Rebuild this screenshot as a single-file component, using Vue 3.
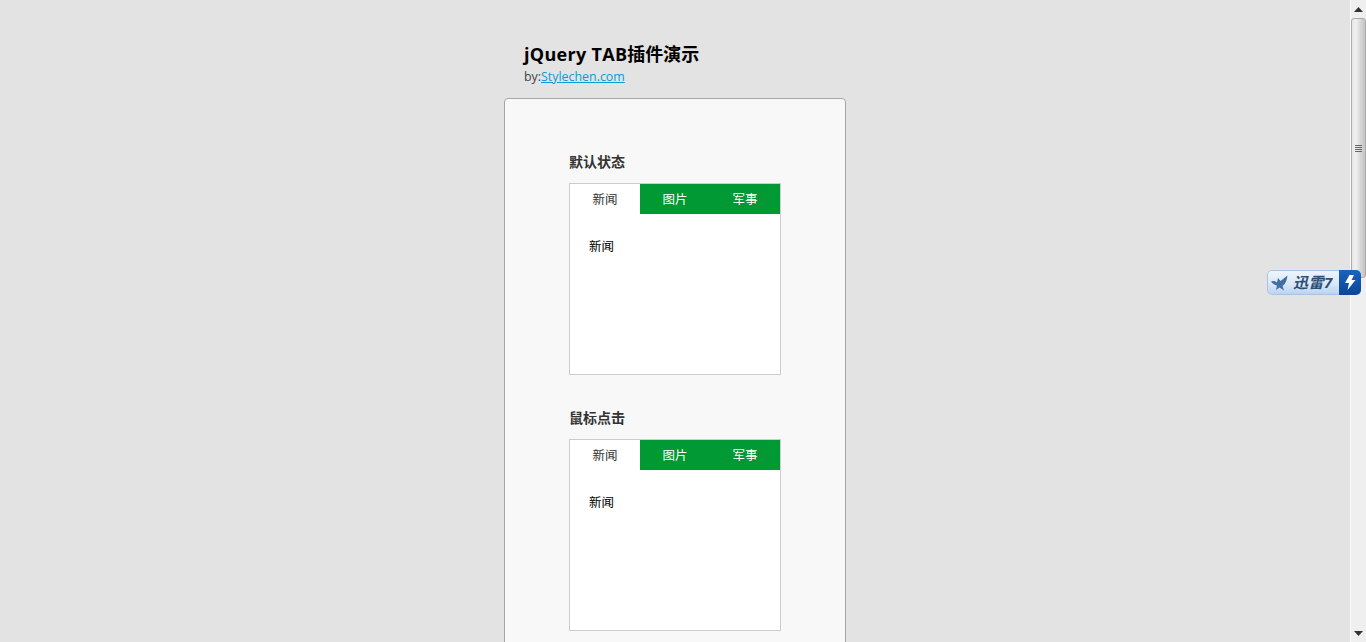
<template>
  <div class="page">
    <div class="main">
      <div class="wrap">
        <h1 class="title"><span class="latin">jQuery TAB</span>插件演示</h1>
        <p class="by">by:<a class="link" href="#">Stylechen.com</a></p>
        <div class="card">
          <section v-for="demo in demos" :key="demo" class="demo">
            <h3 class="demo-title">{{ demo }}</h3>
            <div class="tabbox">
              <ul class="tabs">
                <li v-for="(tab, i) in tabs" :key="tab" class="tab" :class="{ active: i === 0 }">{{ tab }}</li>
              </ul>
              <div class="tab-body">{{ tabs[0] }}</div>
            </div>
          </section>
        </div>
      </div>
    </div>

    <div class="scrollbar">
      <div class="arrow-btn">
        <svg width="9" height="5" viewBox="0 0 9 5"><path d="M4.5 0L9 5H0z" fill="#333" /></svg>
      </div>
      <div class="thumb">
        <div class="grip"><i></i><i></i><i></i><i></i></div>
      </div>
      <div class="track"></div>
      <div class="arrow-btn">
        <svg width="9" height="5" viewBox="0 0 9 5"><path d="M0 0H9L4.5 5z" fill="#333" /></svg>
      </div>
    </div>

    <div class="xunlei">
      <div class="xl-left">
        <svg class="xl-bird" width="18" height="16" viewBox="0 0 18 16">
          <path d="M0 6.500C2.500 5.500 4.500 6 6 7.500L7 3L9.500 6L16.500 0.500C16 5 14.500 9 11.500 11L13 15.500L8.500 12.500L5 15L6 10.500C3.500 10 1.500 8.500 0 6.500z" fill="#3f6fa3" />
        </svg>
        <span class="xl-text">迅雷7</span>
      </div>
      <div class="xl-right">
        <svg width="12" height="15" viewBox="0 0 12 15"><path d="M5.500 0H10L7.500 5H11.500L3.500 15L5 8H1z" fill="#fff" /></svg>
      </div>
    </div>
  </div>
</template>

<script setup>
const demos = ['默认状态', '鼠标点击'];
const tabs = ['新闻', '图片', '军事'];
</script>

<style>
html,
body {
  margin: 0;
  height: 100%;
  overflow: hidden;
  background: #e3e3e3;
}
</style>

<style scoped>
.page {
  position: relative;
  display: flex;
  height: 642px;
  overflow: hidden;
  font-family: "Open Sans", "Noto Sans CJK SC", sans-serif;
  color: #333;
}

.main {
  flex: 1;
  min-width: 0;
}

.wrap {
  width: 342px;
  margin: 0 auto;
}

.title {
  margin: 0;
  padding: 40px 0 0 20px;
  height: 28px;
  font-size: 18px;
  line-height: 28px;
  font-weight: 700;
  color: #000;
}

.latin {
  letter-spacing: 0.3px;
}

.by {
  margin: 0;
  padding: 1px 0 0 20px;
  height: 29px;
  font-size: 12.4px;
  line-height: 16px;
  color: #444;
}

.link {
  color: #0a9bd6;
}

.card {
  box-sizing: border-box;
  height: 700px;
  padding: 30px 64px 0;
  background: #f8f8f8;
  border: 1px solid #a6a6a6;
  border-radius: 4px;
}

.demo {
  height: 256px;
}

.demo-title {
  margin: 0;
  padding-top: 24px;
  height: 30px;
  font-size: 14px;
  line-height: 18px;
  font-weight: 700;
  color: #333;
}

.tabbox {
  box-sizing: border-box;
  width: 212px;
  height: 192px;
  background: #fff;
  border: 1px solid #ccc;
}

.tabs {
  display: flex;
  margin: 0;
  padding: 0;
  list-style: none;
  background: #093;
}

.tab {
  width: 70px;
  height: 30px;
  font-size: 12.5px;
  line-height: 32px;
  text-align: center;
  color: #fff;
}

.tab.active {
  background: #fff;
  color: #333;
}

.tab-body {
  padding: 24px 0 0 19px;
  font-size: 12.5px;
  line-height: 18px;
  color: #000;
}

.scrollbar {
  display: flex;
  flex-direction: column;
  flex: none;
  box-sizing: border-box;
  width: 16px;
  height: 642px;
  background: #efefef;
  border-left: 1px solid #fafafa;
}

.arrow-btn {
  display: flex;
  flex: none;
  align-items: center;
  justify-content: center;
  height: 18px;
}

.thumb {
  display: flex;
  flex: none;
  align-items: center;
  justify-content: center;
  box-sizing: border-box;
  height: 260px;
  background: linear-gradient(to right, #e6e6e6, #f0f0f0 30%, #d4d4d4 70%, #c4c4c4);
  border: 1px solid #ababab;
  border-radius: 3px;
}

.grip {
  display: flex;
  flex-direction: column;
  gap: 1px;
}

.grip i {
  display: block;
  width: 7px;
  height: 1px;
  background: #666;
}

.track {
  flex: 1;
}

.xunlei {
  position: absolute;
  top: 270px;
  left: 1267px;
  display: flex;
  width: 94px;
  height: 25px;
  overflow: hidden;
  border-radius: 5px;
}

.xl-left {
  display: flex;
  flex: 1;
  align-items: center;
  box-sizing: border-box;
  padding-left: 3px;
  background: linear-gradient(to bottom, #eef5fd, #dbe8f8 55%, #bcd3ef);
  border: 1px solid #a9c4e3;
  border-right: 0;
  border-radius: 5px 0 0 5px;
}

.xl-bird {
  flex: none;
}

.xl-text {
  margin-left: 4px;
  font-size: 15px;
  line-height: 23px;
  letter-spacing: 0.5px;
  font-style: italic;
  font-weight: 700;
  color: #2d5078;
  white-space: nowrap;
}

.xl-right {
  display: flex;
  flex: none;
  align-items: center;
  justify-content: center;
  width: 22px;
  background: linear-gradient(to bottom, #1a62c0, #0c449a);
}
</style>
